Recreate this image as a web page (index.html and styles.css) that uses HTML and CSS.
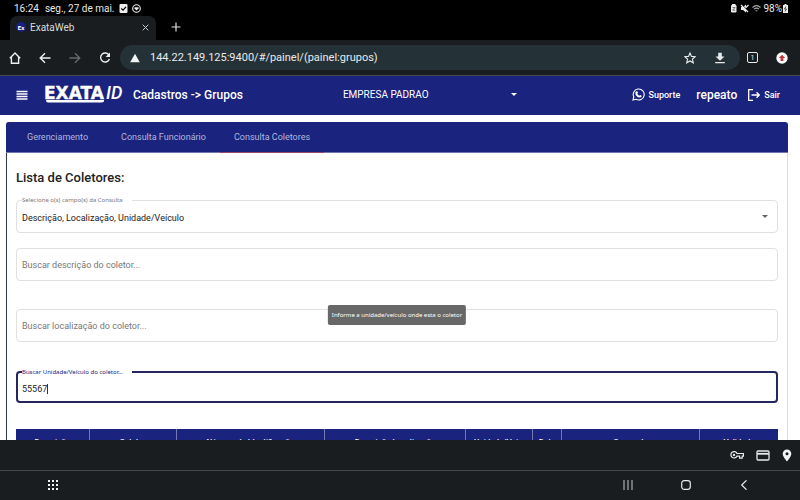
FILE: index.html
```html
<!DOCTYPE html>
<html lang="pt-BR">
<head>
<meta charset="utf-8">
<meta name="viewport" content="width=device-width, initial-scale=1">
<title>ExataWeb</title>
<link rel="stylesheet" href="styles.css">
</head>
<body>
<div class="status">
  <span>16:24</span><span class="date">seg., 27 de mai.</span>
  <svg class="i9" viewBox="0 0 9 9"><rect x="0.5" width="8" height="9" rx="1" fill="#eee"/><path d="M2.3 4.5l1.7 1.7 3-3.4" fill="none" stroke="#000" stroke-width="1.2"/></svg>
  <svg class="i9 second" viewBox="0 0 9 9"><circle cx="4.5" cy="4.5" r="3.8" fill="none" stroke="#eee" stroke-width="1.1"/><path d="M2.5 3.2h4v1.2l-2 2-2-2z" fill="#eee"/></svg>
  <span class="spacer"></span>
  <svg class="i9" viewBox="0 0 9 9"><rect x="2" y="1" width="5.5" height="7.5" rx="1.2" fill="#eee"/><path d="M3 0h3.5v2H3z" fill="#eee"/><path d="M3.500 3.500h2.600L3.700 6.200h2.500" fill="none" stroke="#555" stroke-width=".8"/></svg>
  <svg class="i9 mute" viewBox="0 0 9 9"><path d="M1 3h2l3-2.500v8L3 6H1z" fill="#eee"/><path d="M1.800.6l6.800 6.800" stroke="#000"/><path d="M1 1l7 7M8.500 1L6 3.500" stroke="#eee" stroke-width="1.200"/></svg>
  <svg class="i9 wifi" viewBox="0 0 9 9"><path d="M.5 3.5c2.5-2.4 5.5-2.4 8 0M2 5.200c1.700-1.500 3.300-1.500 5 0M3.600 6.800h1.800" fill="none" stroke="#aaa" stroke-width="1.1"/></svg>
  <span>98%</span>
  <svg class="batt" viewBox="0 0 5 9"><path d="M1.500 0h2v1H5v8H0V1h1.500z" fill="#eee"/><path d="M3 2.500L1.500 5h2L2 7.500" fill="none" stroke="#222" stroke-width=".8"/></svg>
</div>

<div class="tabstrip">
  <div class="btab">
    <svg class="favicon" viewBox="0 0 10 10"><circle cx="5" cy="5" r="5" fill="#1b2080"/><text x="5" y="7.500" text-anchor="middle" class="favtext">Ex</text></svg>
    <span class="btitle">ExataWeb</span>
    <button class="plain" aria-label="Fechar guia"><svg width="7" height="7" viewBox="0 0 7 7"><path d="M.7.7l5.600 5.600M6.300.7L.7 6.300" stroke="#c8cccf"/></svg></button>
  </div>
  <button class="plain newtab" aria-label="Nova guia"><svg width="10" height="10" viewBox="0 0 10 10"><path d="M5 .5v9M.5 5h9" stroke="#dde0e2" stroke-width="1.200"/></svg></button>
</div>

<div class="toolbar">
  <button class="plain" aria-label="Início"><svg width="12" height="12" viewBox="0 0 12 12"><path d="M.8 6.200L6 1l5.200 5.200M2.400 5v6.200h7.200V5" fill="none" stroke="#eceff1" stroke-width="1.400"/></svg></button>
  <button class="plain" aria-label="Voltar"><svg width="12" height="12" viewBox="0 0 12 12"><path d="M11.500 6H1.500M6 1.200L1.200 6 6 10.800" fill="none" stroke="#eceff1" stroke-width="1.400"/></svg></button>
  <button class="plain" aria-label="Avançar"><svg width="12" height="12" viewBox="0 0 12 12"><path d="M.5 6h10M6 1.200L10.800 6 6 10.800" fill="none" stroke="#666a6e" stroke-width="1.300"/></svg></button>
  <button class="plain" aria-label="Recarregar"><svg width="12" height="12" viewBox="0 0 12 12"><path d="M10 3.200A4.500 4.500 0 1 0 10.400 7" fill="none" stroke="#eceff1" stroke-width="1.400"/><path d="M11 .6v4.400H6.600z" fill="#eceff1"/></svg></button>
  <div class="omnibox">
    <svg width="10" height="10" viewBox="0 0 10 10"><path d="M5 .8L9.800 9.200H.2z" fill="#f1f3f4"/></svg>
    <input class="url" aria-label="Endereço" value="144.22.149.125:9400/#/painel/(painel:grupos)">
    <button class="plain" aria-label="Favoritar"><svg width="12" height="12" viewBox="0 0 12 12"><path d="M6 1l1.500 3.400 3.700.3-2.800 2.500.9 3.600L6 8.900l-3.300 1.900.9-3.600L.8 4.700l3.700-.3z" fill="none" stroke="#e8eaed" stroke-width="1.100"/></svg></button>
    <button class="plain" aria-label="Baixar"><svg width="12" height="12" viewBox="0 0 12 12"><path d="M4.200.8h3.600v3.700h2.700L6 8.800 1.500 4.500h2.700zM1.200 10h9.600v1.300H1.200z" fill="#e8eaed"/></svg></button>
  </div>
  <button class="plain count" aria-label="Guias">1</button>
  <button class="plain" aria-label="Atualização"><svg width="12" height="12" viewBox="0 0 12 12"><circle cx="6" cy="6" r="5.700" fill="#fff"/><path d="M6 2.800L9.200 6H7.400v3H4.600V6H2.800z" fill="#c5333d"/></svg></button>
</div>

<div class="page">
  <header class="appbar">
    <button class="plain burger" aria-label="Menu"><svg width="12" height="10" viewBox="0 0 12 10"><path d="M.5 1.500h11M.5 4h11M.5 6.500h11M.5 9h11" stroke="#fff" stroke-width="1.500"/></svg></button>
    <svg class="logo" width="80" height="20" viewBox="0 0 80 20" role="img" aria-label="EXATA ID"><text x="0" y="14" class="exata">EXATA</text><text x="62" y="14" class="id">ID</text><path d="M2 15h58v1.500q-1 1-3 1H4q-2 0-2-2.500z" fill="#fff"/></svg>
    <h1>Cadastros -&gt; Grupos</h1>
    <div class="company"><select aria-label="Empresa"><option>EMPRESA PADRAO</option></select><svg width="6" height="3" viewBox="0 0 6 3"><path d="M0 0h6L3 3z" fill="#fff"/></svg></div>
    <a class="action" href="#suporte"><svg width="13" height="13" viewBox="0 0 13 13"><path d="M1 12l.8-3A5.500 5.500 0 1 1 4 11.300z" fill="none" stroke="#fff" stroke-width="1.100"/><path d="M4.300 3.200l1 .1.700 1.600-.7.900q.7 1.300 2 1.900l.8-.8 1.600.8q0 1.700-1.600 1.900-4.800-.6-4.800-5.200z" fill="#fff"/></svg>Suporte</a>
    <span class="user">repeato</span>
    <a class="action" href="#sair"><svg width="12" height="12" viewBox="0 0 12 12"><path d="M5 .7H.7v10.600H5M3.500 6h7.600M8.500 3.200L11.300 6 8.500 8.800" fill="none" stroke="#fff" stroke-width="1.300"/></svg>Sair</a>
  </header>

  <main class="card">
    <nav class="tabs">
      <a href="#gerenciamento">Gerenciamento</a>
      <a href="#funcionario">Consulta Funcionário</a>
      <a href="#coletores" class="active">Consulta Coletores</a>
    </nav>
    <div class="content">
      <h2>Lista de Coletores:</h2>
      <fieldset class="field">
        <legend><label for="campos">Selecione o(s) campo(s) da Consulta</label></legend>
        <select id="campos"><option>Descrição, Localização, Unidade/Veículo</option></select>
        <svg width="6" height="3" viewBox="0 0 6 3"><path d="M0 0h6L3 3z" fill="#666"/></svg>
      </fieldset>
      <div class="field bare"><input type="text" aria-label="Buscar descrição do coletor" placeholder="Buscar descrição do coletor..."></div>
      <div class="field bare"><input type="text" aria-label="Buscar localização do coletor" placeholder="Buscar localização do coletor..."><div class="tooltip" role="tooltip">Informe a unidade/veículo onde esta o coletor</div></div>
      <fieldset class="field focused">
        <legend><label for="unidade">Buscar Unidade/Veículo do coletor...</label></legend>
        <span class="entry"><input id="unidade" type="text" value="55567" size="5"><i class="caret"></i></span>
      </fieldset>
      <table>
        <colgroup><col class="c1"><col class="c2"><col class="c3"><col class="c4"><col class="c5"><col class="c6"><col class="c7"><col class="c8"></colgroup>
        <thead><tr><th>Descrição</th><th>Coletor</th><th>Número de Identificação</th><th>Descrição Localização</th><th>Unidade/Veíc.</th><th>Data</th><th>Comando</th><th>Validade</th></tr></thead>
      </table>
    </div>
  </main>
</div>

<div class="autofill">
  <button class="plain" aria-label="Senhas"><svg width="14" height="10" viewBox="0 0 14 10"><path d="M7 3.500h6.400v2.600h-1.200v2H9.600v-2H7A3.200 3.200 0 1 1 7 3.500z" fill="none" stroke="#e8eaed" stroke-width="1.200"/><circle cx="4" cy="4.900" r="1.200" fill="#e8eaed"/></svg></button>
  <button class="plain" aria-label="Cartões"><svg width="14" height="11" viewBox="0 0 14 11"><rect x="1" y="1" width="12" height="9" rx="1" fill="none" stroke="#e8eaed" stroke-width="1.300"/><path d="M1 3.800h12" stroke="#e8eaed" stroke-width="1.800"/></svg></button>
  <button class="plain" aria-label="Endereços"><svg width="10" height="13" viewBox="0 0 10 13"><path d="M5 .5a4.300 4.300 0 0 1 4.300 4.300C9.300 8 5 12.500 5 12.500S.7 8 .7 4.800A4.300 4.300 0 0 1 5 .5z" fill="#f1f3f4"/><circle cx="5" cy="4.700" r="1.500" fill="#191d1f"/></svg></button>
</div>
<div class="navbar">
  <button class="plain apps" aria-label="Aplicativos"><svg width="10" height="10" viewBox="0 0 10 10"><path d="M0 1h2m2 0h2m2 0h2M0 5h2m2 0h2m2 0h2M0 9h2m2 0h2m2 0h2" stroke="#f1f3f4" stroke-width="2"/></svg></button>
  <button class="plain" aria-label="Recentes"><svg width="10" height="10" viewBox="0 0 10 10"><path d="M1 0v10M5 0v10M9 0v10" stroke="#aaadb0" stroke-width="1.200"/></svg></button>
  <button class="plain" aria-label="Tela inicial"><svg width="10" height="10" viewBox="0 0 10 10"><rect x=".7" y=".7" width="8.600" height="8.600" rx="2.500" fill="none" stroke="#e8eaed" stroke-width="1.200"/></svg></button>
  <button class="plain" aria-label="Voltar"><svg width="10" height="10" viewBox="0 0 10 10"><path d="M7.500.3L2.700 5l4.800 4.700" fill="none" stroke="#e8eaed" stroke-width="1.200"/></svg></button>
</div>
</body>
</html>
```
FILE: styles.css
```css
* { box-sizing: border-box; }
body { margin: 0; height: 100vh; display: flex; flex-direction: column; overflow: hidden; background: #000; font-family: Roboto, sans-serif; font-size: 9px; color: #222; }
svg { display: block; flex: none; }
a { color: inherit; text-decoration: none; }
input, select { font: inherit; color: inherit; border: 0; background: none; padding: 0; margin: 0; outline: 0; appearance: none; min-width: 0; }
.plain { border: 0; background: none; padding: 0; color: inherit; font: inherit; display: flex; align-items: center; justify-content: center; }

.status { flex: none; height: 16px; display: flex; align-items: center; padding: 0 12px 0 14px; color: #e8e8e8; font-size: 10px; }
.date { margin: 0 4px 0 6px; }
.spacer { flex: 1; }
.i9 { width: 9px; height: 9px; }
.second { margin-left: 4px; }
.mute { margin: 0 3px 0 2px; }
.wifi { margin: 0 2px 0 0; }
.batt { width: 5px; height: 9px; margin-left: 1px; }

.tabstrip { flex: none; height: 24px; display: flex; align-items: center; padding-left: 10px; }
.btab { width: 146px; height: 24px; background: #191d1f; border-radius: 7px 7px 0 0; display: flex; align-items: center; padding: 0 7px 2px 6px; color: #d8dbdd; font-size: 10px; }
.favicon { width: 10px; height: 10px; }
.favtext { font: bold 6px Roboto, sans-serif; fill: #fff; }
.btitle { flex: 1; padding-left: 4px; }
.newtab { margin: 0 0 2px 15px; }

.toolbar { flex: none; height: 36px; display: flex; align-items: center; gap: 18px; padding: 0 12px 0 9px; background: #191d1f; border-bottom: 1px solid #454a50; color: #e8eaed; }
.omnibox { flex: 1; height: 25px; margin: 0 -6px 0 -9px; border-radius: 13px; background: #243237; display: flex; align-items: center; gap: 18px; padding: 0 14px 0 10px; }
.omnibox { margin-right: -11px; }
.url { flex: 1; font-size: 11px; margin-left: -8px; }
.count { width: 11px; height: 11px; border: 1px solid #e8eaed; border-radius: 2px; font-size: 7px; }

.page { flex: 1; min-height: 0; overflow: hidden; background: #fff; }
.appbar { height: 39px; display: flex; align-items: center; background: #1a237e; color: #fff; padding: 0 20px 2px 16px; font-weight: 500; }
.logo { margin: 0 9px 0 16px; overflow: visible; }
.exata { font: bold 17px "DejaVu Sans", sans-serif; fill: #fff; stroke: #fff; stroke-width: .4px; }
.id { font: italic 500 18px Roboto, sans-serif; fill: #fff; }
h1 { margin: 0; font-size: 12px; font-weight: 500; }
.company { margin: 0 auto 0 100px; width: 174px; display: flex; align-items: center; font-size: 10px; font-weight: 400; }
.company select { flex: 1; }
.action { display: flex; align-items: center; gap: 4px; font-size: 9px; }
.user { font-size: 12px; margin: 0 11px 0 16px; }

.card { margin: 7px 12px 0 6px; border: 1px solid #ddd; border-left-color: #333845; border-top: 0; border-radius: 4px 4px 0 0; }
.tabs { display: flex; height: 31px; background: #1a237e; border-radius: 3px 3px 0 0; margin: 0 -1px; border-bottom: 1px solid #7076b0; color: #b3b7dd; }
.tabs a { display: flex; align-items: center; padding: 0 14px 0 21px; }
.tabs a + a { padding-left: 14px; margin-left: 5px; }
.tabs a.active { margin: 0 0 -1px; padding-bottom: 1px; border-bottom: 1px solid #9a4468; }
.content { padding: 16px 9px 0; }
h2 { margin: 0 0 9px; font-size: 13px; line-height: 18px; font-weight: 500; }
.field { position: relative; display: flex; align-items: center; min-width: 0; margin: 0 0 15px; padding: 0 9px 0 5px; height: 37px; border: 1px solid #e0e0e0; border-radius: 4px; }
.field legend { padding: 0 9px 0 0; height: 8px; line-height: 8px; font-family: "Noto Sans", sans-serif; font-size: 6px; color: #777; }
.field > select { flex: 1; height: 28px; width: 100%; }
.field > svg { position: absolute; right: 9px; top: 11px; }
.bare { height: 33px; margin-bottom: 28px; }
.bare input { flex: 1; }
.bare input::placeholder { color: #777; opacity: 1; }
.bare + .focused { margin-top: -2px; }
.tooltip { position: absolute; left: 50%; top: -5px; transform: translateX(-50%); padding: 0 4px; height: 20px; line-height: 20px; background: #686868; color: #fff; border-radius: 2px; font-family: "Noto Sans", sans-serif; font-size: 6px; white-space: nowrap; }
.field.focused { height: 35px; padding-left: 4px; border: 2px solid #25255f; margin-bottom: 26px; }
.focused legend { color: #1a237e; }
.entry { display: flex; align-items: center; height: 23px; }
.entry input { width: 25px; }
.caret { width: 1px; height: 10px; background: #333; }

table { width: 100%; border-collapse: collapse; table-layout: fixed; background: #1a237e; color: #fff; }
th { height: 25px; padding: 0; font-size: 8px; font-weight: 500; white-space: nowrap; border-left: 1px solid #7379b5; }
th:first-child { border-left: 0; }
.c1 { width: 9.6%; } .c2 { width: 11.4%; } .c3 { width: 19.5%; } .c4 { width: 18.5%; }
.c5 { width: 8.8%; } .c6 { width: 3.8%; } .c7 { width: 18.1%; } .c8 { width: 10.3%; }

.autofill { flex: none; height: 30px; display: flex; align-items: center; justify-content: flex-end; gap: 12px; padding-right: 8px; background: #191d1f; }
.navbar { flex: none; height: 30px; display: flex; align-items: center; gap: 48px; padding: 0 51px 2px 48px; background: #191d1f; border-top: 1px solid #45494b; }
.apps { margin-right: auto; }
```
